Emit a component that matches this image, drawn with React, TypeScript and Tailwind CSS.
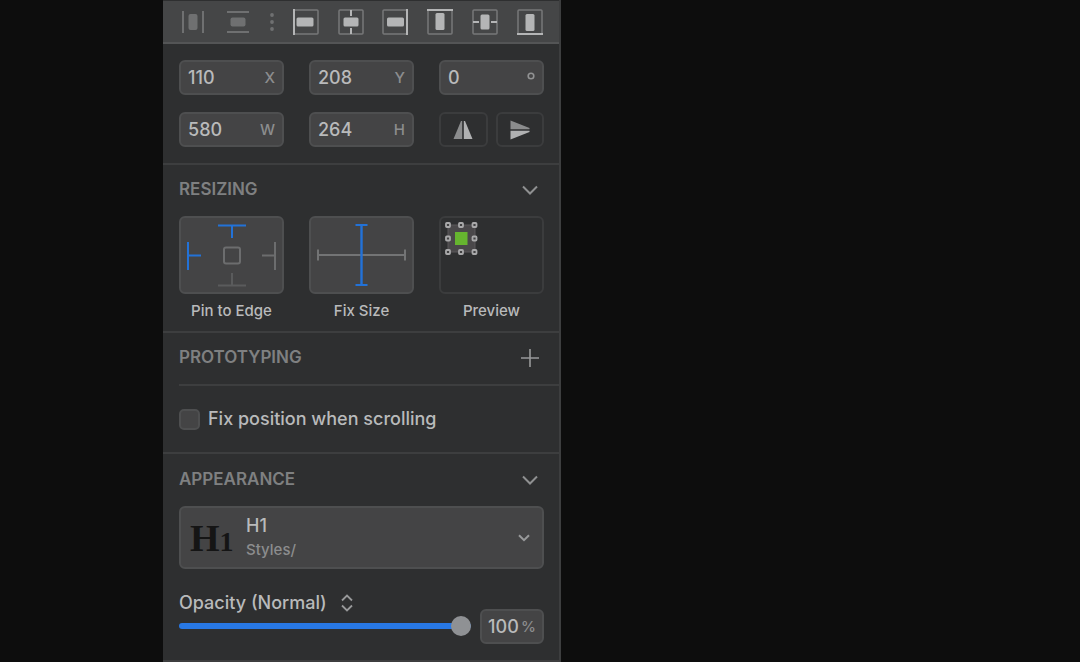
import { useState, type ReactNode } from "react";

type AlignIcon = { label: string; art: ReactNode };

const frame = <rect x="1" y="1" width="24" height="24" rx="1" fill="none" stroke="#777879" strokeWidth="1.5" />;

const distribute: AlignIcon[] = [
  {
    label: "Distribute horizontally",
    art: (
      <g fill="#6f7071">
        <rect x="2" y="2" width="2" height="22" />
        <rect x="22" y="2" width="2" height="22" />
        <rect x="8.5" y="5" width="9" height="16" rx="2" />
      </g>
    ),
  },
  {
    label: "Distribute vertically",
    art: (
      <g fill="#6f7071">
        <rect x="2" y="2" width="22" height="2" />
        <rect x="2" y="22" width="22" height="2" />
        <rect x="5.5" y="8.5" width="15" height="9" rx="2" />
      </g>
    ),
  },
];

const align: AlignIcon[] = [
  {
    label: "Align left",
    art: (
      <>
        {frame}
        <g fill="#b4b5b6">
          <rect x="0" y="0" width="2" height="26" />
          <rect x="3.5" y="8.5" width="17" height="9" rx="1.5" />
        </g>
      </>
    ),
  },
  {
    label: "Align horizontal centers",
    art: (
      <>
        {frame}
        <g fill="#b4b5b6">
          <rect x="12" y="1" width="2" height="6" />
          <rect x="12" y="19" width="2" height="6" />
          <rect x="5.5" y="8.5" width="15" height="9" rx="1.5" />
        </g>
      </>
    ),
  },
  {
    label: "Align right",
    art: (
      <>
        {frame}
        <g fill="#b4b5b6">
          <rect x="24" y="0" width="2" height="26" />
          <rect x="5" y="8.5" width="17" height="9" rx="1.5" />
        </g>
      </>
    ),
  },
  {
    label: "Align top",
    art: (
      <>
        {frame}
        <g fill="#b4b5b6">
          <rect x="0" y="0" width="26" height="2" />
          <rect x="8.5" y="4" width="9" height="17" rx="1.5" />
        </g>
      </>
    ),
  },
  {
    label: "Align vertical centers",
    art: (
      <>
        {frame}
        <g fill="#b4b5b6">
          <rect x="1" y="12" width="6" height="2" />
          <rect x="19" y="12" width="6" height="2" />
          <rect x="8.5" y="5.5" width="9" height="15" rx="1.5" />
        </g>
      </>
    ),
  },
  {
    label: "Align bottom",
    art: (
      <>
        {frame}
        <g fill="#b4b5b6">
          <rect x="0" y="24" width="26" height="2" />
          <rect x="8.5" y="5" width="9" height="17" rx="1.5" />
        </g>
      </>
    ),
  },
];

function ToolButton({ label, art }: AlignIcon) {
  return (
    <button type="button" aria-label={label} className="size-[26px] shrink-0">
      <svg viewBox="0 0 26 26" className="size-full">
        {art}
      </svg>
    </button>
  );
}

function Field({ label, unit, initial }: { label: string; unit: string; initial: string }) {
  const [value, setValue] = useState(initial);
  return (
    <label className="flex h-[35px] min-w-0 items-center rounded-md border-2 border-[#4e4f50] bg-[#444445] px-[7px] pt-px">
      <input
        aria-label={label}
        value={value}
        onChange={(e) => setValue(e.target.value)}
        className="w-full min-w-0 flex-1 bg-transparent text-lg font-medium text-[#b9babb] outline-none"
      />
      {unit === "°" ? (
        <svg viewBox="0 0 8 8" className="mb-1 size-2 shrink-0">
          <circle cx="4" cy="4" r="2.8" fill="none" stroke="#919293" strokeWidth="1.6" />
        </svg>
      ) : (
        <span className="text-[15px] font-medium text-[#8c8d8e]">{unit}</span>
      )}
    </label>
  );
}

function Chevron() {
  return (
    <svg viewBox="0 0 16 10" className="h-[10px] w-4">
      <path d="M1 1.5 8 8.5 15 1.5" fill="none" stroke="#8f9091" strokeWidth="2" />
    </svg>
  );
}

function SectionHead({ title, action, icon }: { title: string; action: string; icon: ReactNode }) {
  return (
    <div className="flex h-6 items-center justify-between">
      <h2 className="text-[17px] font-semibold text-[#7f8081]">{title}</h2>
      <button type="button" aria-label={action} className="flex w-7 items-center justify-center">
        {icon}
      </button>
    </div>
  );
}

function PinArt() {
  return (
    <svg viewBox="0 0 101 74" className="w-full">
      <g fill="none" strokeWidth="2">
        <path d="M37 7.500H65M51 7.500V20M7 24V52M7 37.500H20" stroke="#2272d8" />
        <path d="M94 24V52M81 37.500H94" stroke="#6c6d6e" />
        <path d="M37 67.500H65M51 55V67.500" stroke="#5a5b5c" />
        <rect x="43" y="29.500" width="16" height="16" rx="2" stroke="#6c6d6e" />
      </g>
    </svg>
  );
}

function SizeArt() {
  return (
    <svg viewBox="0 0 101 74" className="w-full">
      <g fill="none" strokeWidth="2">
        <path d="M7 37H94M7 31.500V42.500M94 31.500V42.500" stroke="#737475" />
        <path d="M50.500 7V67" stroke="#2272d8" strokeWidth="2.4" />
        <path d="M44.500 7H56.500M44.500 67H56.500" stroke="#2272d8" />
      </g>
    </svg>
  );
}

const handles = [
  [7, 7], [20, 7], [33.5, 7],
  [7, 20.5], [33.5, 20.5],
  [7, 34], [20, 34], [33.5, 34],
];

function PreviewArt() {
  return (
    <svg viewBox="0 0 101 74" className="w-full">
      <rect x="7" y="7" width="27" height="27" fill="#4a484a" stroke="#5a595a" />
      <rect x="14" y="14" width="12.500" height="13" fill="#66b52f" />
      {handles.map(([x, y]) => (
        <rect key={`${x}-${y}`} x={x - 2} y={y - 2} width="4" height="4" rx="0.8" fill="#414142" stroke="#a9a9aa" strokeWidth="1.8" />
      ))}
    </svg>
  );
}

export default function App() {
  const [fixed, setFixed] = useState(false);
  const [opacity, setOpacity] = useState(100);

  return (
    <div className="grid min-h-screen grid-cols-[163fr_398fr_519fr] bg-[#0d0d0d] font-['Inter',sans-serif]">
      <main className="col-start-2 border-r-2 border-[#3d3e3f] bg-[#2e2f30] text-[#b9babb]">
        <div className="flex h-11 items-center justify-between border-t border-b-2 border-t-[#2e2f30] border-b-[#545556] bg-[#454647] pr-4 pl-[17px]">
          {distribute.map((item) => (
            <ToolButton key={item.label} {...item} />
          ))}
          <svg viewBox="0 0 4 20" className="h-5 w-1 shrink-0" fill="#6f7071">
            <circle cx="2" cy="3" r="1.9" />
            <circle cx="2" cy="10" r="1.9" />
            <circle cx="2" cy="17" r="1.9" />
          </svg>
          {align.map((item) => (
            <ToolButton key={item.label} {...item} />
          ))}
        </div>

        <section className="grid grid-cols-3 gap-x-[25px] gap-y-[17px] border-b-2 border-[#3d3e3f] pt-4 pr-[15px] pb-4 pl-4">
          <Field label="X position" unit="X" initial="110" />
          <Field label="Y position" unit="Y" initial="208" />
          <Field label="Rotation" unit="°" initial="0" />
          <Field label="Width" unit="W" initial="580" />
          <Field label="Height" unit="H" initial="264" />
          <div className="grid grid-cols-2 gap-2">
            <button type="button" aria-label="Flip horizontally" className="flex items-center justify-center rounded-md border-2 border-[#3b3c3d]">
              <svg viewBox="0 0 20 20" className="size-5">
                <path d="M8 1H9.200V19H0.500Z" fill="#8b8c8d" />
                <path d="M10.800 1H12L19.500 19H10.800Z" fill="#b0b1b2" />
              </svg>
            </button>
            <button type="button" aria-label="Flip vertically" className="flex items-center justify-center rounded-md border-2 border-[#3b3c3d]">
              <svg viewBox="0 0 20 20" className="size-5">
                <path d="M0.500 0.500 19.500 8V9.200H0.500Z" fill="#8b8c8d" />
                <path d="M0.500 10.800H19.500V12L0.500 19.500Z" fill="#b0b1b2" />
              </svg>
            </button>
          </div>
        </section>

        <section className="border-b-2 border-[#3d3e3f] pt-[13px] pr-[15px] pb-2 pl-4">
          <SectionHead title="RESIZING" action="Collapse resizing" icon={<Chevron />} />
          <div className="mt-[14px] grid grid-cols-3 gap-x-[25px] text-center text-[15px] leading-6 font-medium">
            <div>
              <button type="button" aria-label="Pin to edge" className="mb-[5px] block w-full rounded-md border-2 border-[#4e4f50] bg-[#444445]">
                <PinArt />
              </button>
              Pin to Edge
            </div>
            <div>
              <button type="button" aria-label="Fix size" className="mb-[5px] block w-full rounded-md border-2 border-[#4e4f50] bg-[#444445]">
                <SizeArt />
              </button>
              Fix Size
            </div>
            <div>
              <div className="mb-[5px] rounded-md border-2 border-[#3b3c3d]">
                <PreviewArt />
              </div>
              Preview
            </div>
          </div>
        </section>

        <section className="border-b-2 border-[#3d3e3f] pl-4">
          <div className="border-b-2 border-[#3d3e3f] pt-[13px] pr-[15px] pb-[14px]">
            <SectionHead
              title="PROTOTYPING"
              action="Add interaction"
              icon={
                <svg viewBox="0 0 20 20" className="size-5">
                  <path d="M10 1V19M1 10H19" fill="none" stroke="#98999a" strokeWidth="1.6" />
                </svg>
              }
            />
          </div>
          <label className="flex h-[66px] items-center gap-2 text-lg font-medium">
            <input
              type="checkbox"
              checked={fixed}
              onChange={(e) => setFixed(e.target.checked)}
              className="size-[21px] appearance-none rounded-[5px] border-2 border-[#4e4f50] bg-[#444445] checked:bg-[#2878e4]"
            />
            Fix position when scrolling
          </label>
        </section>

        <section className="border-b-2 border-[#3d3e3f] pt-[14px] pr-[15px] pb-4 pl-4">
          <SectionHead title="APPEARANCE" action="Collapse appearance" icon={<Chevron />} />
          <label className="relative mt-[14px] flex h-[63px] items-center rounded-md border-2 border-[#4e4f50] bg-[#444445] pr-3 pl-[9px]">
            <span aria-hidden="true" className="w-11 font-['Liberation_Serif',serif] text-[38px] leading-none font-bold text-[#151515]">
              H<span className="text-[28px] leading-none">1</span>
            </span>
            <span className="ml-3 flex flex-1 flex-col font-medium">
              <span className="text-lg leading-6">H1</span>
              <span className="text-[15px] leading-6 text-[#8c8d8e]">Styles/</span>
            </span>
            <svg viewBox="0 0 12 8" className="h-2 w-3">
              <path d="M1 1.200 6 6.200 11 1.200" fill="none" stroke="#98999a" strokeWidth="2" />
            </svg>
            <select aria-label="Style" className="absolute inset-0 size-full cursor-pointer opacity-0">
              <option>H1</option>
            </select>
          </label>

          <div className="mt-6 flex items-end gap-[9px]">
            <div className="min-w-0 flex-1 pb-2">
              <div className="flex h-5 items-center">
                <select aria-label="Blend mode" className="appearance-none bg-transparent text-lg leading-5 font-medium outline-none">
                  <option>Opacity (Normal)</option>
                </select>
                <svg viewBox="0 0 12 18" className="ml-[14px] h-[18px] w-3">
                  <path d="M1 6.500 6 1.500 11 6.500M1 11.500 6 16.500 11 11.500" fill="none" stroke="#98999a" strokeWidth="1.8" />
                </svg>
              </div>
              <input
                type="range"
                aria-label="Opacity"
                min={0}
                max={100}
                value={opacity}
                onChange={(e) => setOpacity(Number(e.target.value))}
                className="mt-[3px] block h-5 w-full appearance-none bg-transparent [&::-webkit-slider-runnable-track]:h-1.5 [&::-webkit-slider-runnable-track]:rounded-full [&::-webkit-slider-runnable-track]:bg-[#2878e4] [&::-webkit-slider-thumb]:-mt-[7px] [&::-webkit-slider-thumb]:size-5 [&::-webkit-slider-thumb]:appearance-none [&::-webkit-slider-thumb]:rounded-full [&::-webkit-slider-thumb]:bg-[#8f9194]"
              />
            </div>
            <label className="flex h-[35px] w-16 items-center justify-center rounded-md border-2 border-[#4e4f50] bg-[#444445] pt-px">
              <input
                aria-label="Opacity percent"
                value={opacity}
                onChange={(e) => setOpacity(Number(e.target.value) || 0)}
                className="w-[33px] bg-transparent text-lg font-medium outline-none"
              />
              <span className="text-[15px] font-medium text-[#8c8d8e]">%</span>
            </label>
          </div>
        </section>
      </main>
    </div>
  );
}
